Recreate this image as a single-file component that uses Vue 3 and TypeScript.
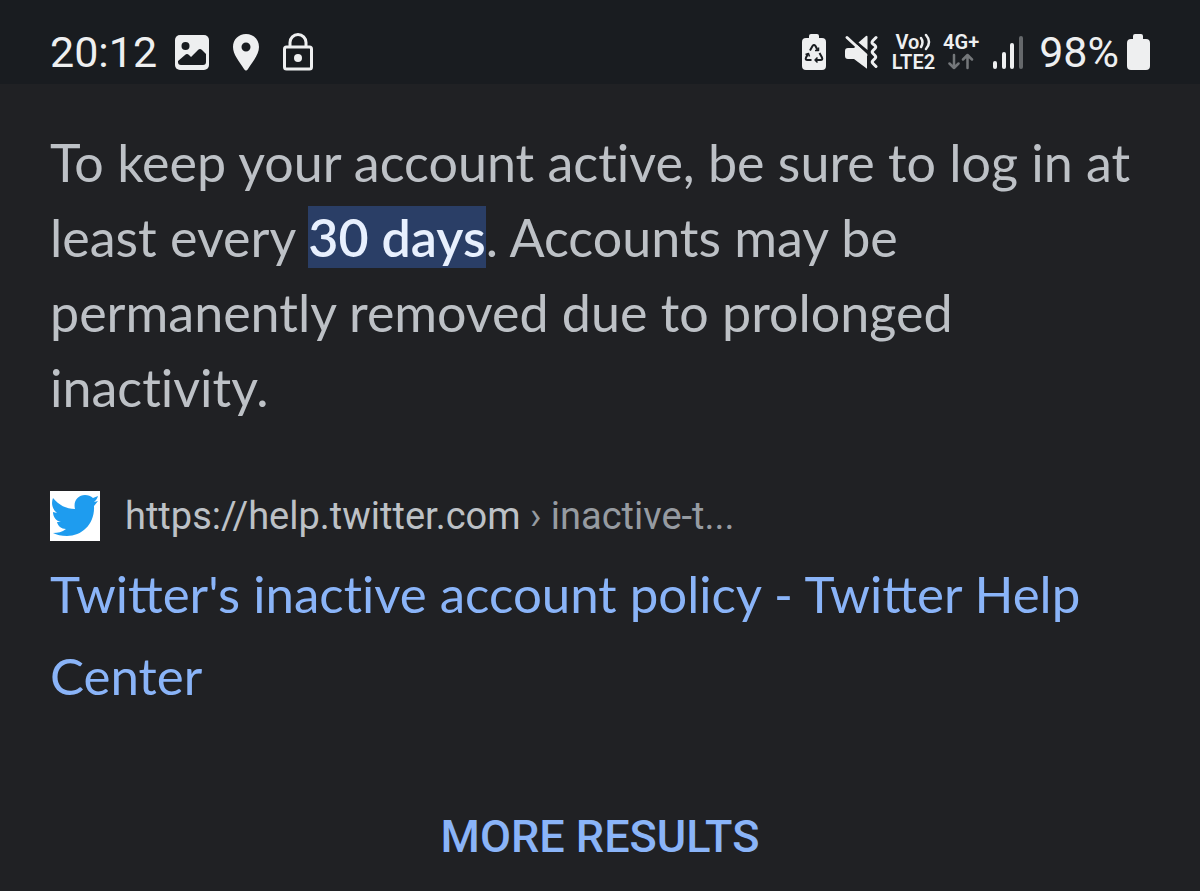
<script setup lang="ts">
const time = '20:12'
const batteryLevel = 98
const source = { site: 'https://help.twitter.com', path: 'inactive-t...' }
const signalBars = [
  { x: 0, height: 8, dim: false },
  { x: 9, height: 17, dim: false },
  { x: 17, height: 26, dim: false },
  { x: 26, height: 33, dim: true },
]
</script>

<template>
  <div class="screen">
    <header class="status">
      <div class="status-left">
        <span class="status-text">{{ time }}</span>
        <svg class="image-icon" width="36" height="38" viewBox="0 0 36 38" aria-hidden="true">
          <rect x="1" y="2" width="34" height="35" rx="5" fill="#eeeff0" />
          <circle cx="11.500" cy="13" r="4" fill="#191c20" />
          <path d="M4 28l7-6q2-2 4 0l2 2 7-7q2-2 4 0l4 4v8q0 3-3 3H7q-3 0-3-3z" fill="#191c20" />
        </svg>
        <svg width="28" height="38" viewBox="0 0 28 38" aria-hidden="true">
          <path
            fill-rule="evenodd"
            fill="#eeeff0"
            d="M14 1C6.500 1 1 6.500 1 14c0 7.500 6 14 11 22q2 3 4 0c5-8 11-14.500 11-22C27 6.500 21.500 1 14 1zm0 8.500a4.500 4.500 0 1 1 0 9 4.500 4.500 0 0 1 0-9z"
          />
        </svg>
        <svg width="32" height="38" viewBox="0 0 32 38" fill="none" stroke="#eeeff0" stroke-width="3" aria-hidden="true">
          <rect x="2.500" y="14" width="27" height="22" rx="2" />
          <path d="M8 14V9.500a8 8 0 0 1 16 0V14" />
          <circle cx="16" cy="25" r="4" fill="#eeeff0" stroke="none" />
        </svg>
      </div>

      <div class="status-right">
        <svg width="26" height="38" viewBox="0 0 26 38" aria-hidden="true">
          <path d="M8 3q0-2 2-2h6q2 0 2 2v2h3q4 0 4 4v24q0 4-4 4H5q-4 0-4-4V9q0-4 4-4h3z" fill="#eeeff0" />
          <g fill="none" stroke="#191c20" stroke-width="2" stroke-linejoin="round">
            <path d="M9 17.500l2.500-4.500q1.500-2 3 0l2 4M18.500 20l2.500 4.500q1 2.500-1.500 2.500H15M10.500 27H6.500q-2.500 0-1.500-2.500l2-3.500" />
            <path d="M17.500 14.500v3h-3.500M16.500 24.500L14 27l2.500 2.500M4.500 21.500l3-1 1 3" stroke-width="1.500" />
          </g>
        </svg>
        <svg class="mute" width="34" height="38" viewBox="0 0 34 38" aria-hidden="true">
          <path d="M4 15h6l3-3 10 9v14q0 1-1 0L10 26H4q-3 0-3-3v-5q0-3 3-3z" fill="#eeeff0" />
          <path d="M14.500 9.500L22 3q1.500-1 1.500 1v13z" fill="#eeeff0" />
          <g fill="none" stroke="#eeeff0" stroke-width="3" stroke-linecap="round" stroke-linejoin="round">
            <path d="M3 4.500l19 17.500" />
            <path d="M32 4.500l-3 3q-2 2 0 3.500l2 1.500q1.500 1.500 0 3l-2 2q-1.500 1.500 0 3l2 2q1.500 1.500 0 3l-2 2q-1.500 1.500 0 3l3 3" />
          </g>
        </svg>
        <div class="network">
          <span class="network-line">
            Vo
            <svg width="12" height="18" viewBox="0 0 12 18" fill="none" stroke="#eeeff0" stroke-width="2.500" stroke-linecap="round" aria-hidden="true">
              <path d="M2 5q3 4 0 9M7 2q6 7 0 14" />
            </svg>
          </span>
          <span class="network-line">LTE2</span>
        </div>
        <div class="network data">
          <span class="network-line">4G+</span>
          <svg width="26" height="20" viewBox="0 0 26 20" fill="none" stroke="#74777a" stroke-width="2.500" stroke-linecap="round" stroke-linejoin="round" aria-hidden="true">
            <path d="M6 3v13M1.500 11.500L6 16l4.500-4.500M19.500 16V3M15 7.500L19.500 3 24 7.500" />
          </svg>
        </div>
        <svg class="signal" width="31" height="38" viewBox="0 0 31 38" aria-hidden="true">
          <rect
            v-for="bar in signalBars"
            :key="bar.x"
            :x="bar.x"
            :y="36 - bar.height"
            width="4"
            :height="bar.height"
            rx="2"
            :fill="bar.dim ? '#65686b' : '#eeeff0'"
          />
        </svg>
        <span class="status-text">{{ batteryLevel }}%</span>
        <svg class="battery" width="24" height="38" viewBox="0 0 24 38" aria-hidden="true">
          <path d="M7 3q0-2 2-2h6q2 0 2 2v3h3q4 0 4 4v23q0 4-4 4H5q-4 0-4-4V10q0-4 4-4h2z" fill="#eeeff0" />
        </svg>
      </div>
    </header>

    <main class="content">
      <p class="snippet">
        To keep your account active, be sure to log in at least every
        <mark>30 days</mark>. Accounts may be permanently removed due to prolonged inactivity.
      </p>

      <article class="result">
        <div class="source">
          <svg class="favicon" width="50" height="50" viewBox="0 0 50 50" aria-hidden="true">
            <rect width="50" height="50" fill="#fff" />
            <path
              fill="#1e9cef"
              d="M3 7c6 7 13 11 22 11C23 10 28 4 35 4c3 0 6 1 8 3l5-2c-1 3-2 4-4 6l4-1-4 5c1 18-12 30-27 30-6 0-10-1-14-3 5 0 9-1 13-4-5 0-8-3-9-7h4c-5-1-8-5-8-10l4 1C2 18 1 12 3 7z"
            />
          </svg>
          <cite>{{ source.site }} <span class="path">› {{ source.path }}</span></cite>
        </div>
        <h3>
          <a href="#">Twitter's <span class="plain">inactive</span> account policy - Twitter Help Center</a>
        </h3>
      </article>

      <button type="button" class="more">MORE RESULTS</button>
    </main>
  </div>
</template>

<style>
body {
  margin: 0;
  background: #202124;
}
</style>

<style scoped>
.screen {
  min-height: 100vh;
  background: #202124;
  color: #bdc1c6;
  font-family: Roboto, "Liberation Sans", sans-serif;
}

svg {
  display: block;
  flex: none;
}

.status {
  display: flex;
  justify-content: space-between;
  align-items: center;
  box-sizing: border-box;
  height: 84px;
  padding: 20px 50px 0;
  background: #191c20;
  color: #eeeff0;
}

.status-left,
.status-right {
  display: flex;
  align-items: center;
}

.status-left {
  gap: 22px;
}

.image-icon {
  margin-left: -5px;
}

.status-right {
  gap: 12px;
}

.status-text {
  font-size: 43px;
  line-height: 52px;
}

.mute {
  margin: 0 2px 0 5px;
}

.network {
  display: flex;
  flex-direction: column;
  align-items: center;
  font-size: 20px;
  font-weight: 600;
  line-height: 20px;
}

.network-line {
  display: flex;
  align-items: center;
}

.data {
  margin-left: -4px;
}

.signal {
  margin: 0 3px 0 2px;
}

.battery {
  margin-left: -5px;
}

.content {
  display: flex;
  flex-direction: column;
  padding: 41px 50px 20px;
}

.snippet {
  margin: 0;
  font-family: Lato, sans-serif;
  font-size: 52px;
  font-variant-ligatures: none;
  line-height: 75px;
}

mark {
  background: #2a3e66;
  color: #e8f0fe;
  font-weight: 600;
}

.result {
  margin-top: 66px;
}

.source {
  display: flex;
  align-items: center;
  gap: 25px;
}

cite {
  font-size: 38px;
  font-style: normal;
  line-height: 50px;
}

.path {
  color: #969ba1;
}

h3 {
  margin: 12px 0 0;
  font-family: Lato, sans-serif;
  font-size: 51px;
  font-weight: 400;
  line-height: 82px;
}

a {
  color: #8ab4f8;
  text-decoration: none;
}

.plain {
  font-variant-ligatures: none;
}

.more {
  align-self: center;
  margin-top: 84px;
  padding: 8px 16px;
  border: 0;
  background: none;
  color: #8ab4f8;
  font-family: inherit;
  font-size: 45px;
  font-weight: 500;
  line-height: 56px;
  cursor: pointer;
}
</style>
